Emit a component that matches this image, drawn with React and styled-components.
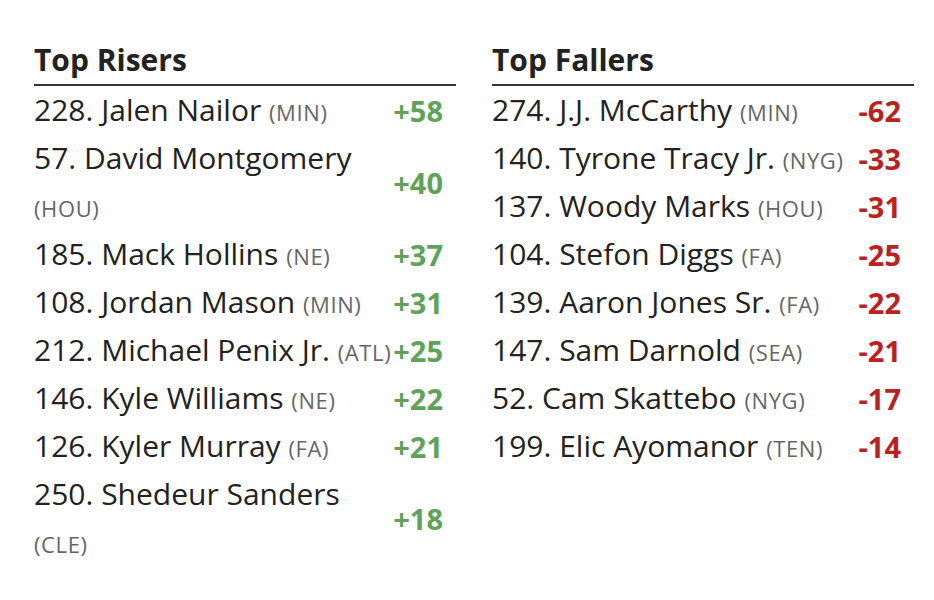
import styled, { createGlobalStyle } from 'styled-components'

const GlobalStyle = createGlobalStyle`
  body {
    margin: 0;
    background: #fff;
    font-family: "Open Sans", "Liberation Sans", sans-serif;
    color: #222;
  }
`

const Page = styled.div`
  display: flex;
  gap: 36px;
  padding: 43px 20px 0 34px;
`

const Column = styled.section`
  width: 422px;
`

const Title = styled.h2`
  margin: 0;
  font-size: 30px;
  font-weight: 700;
  line-height: 34px;
  padding-bottom: 7px;
  border-bottom: 2px solid #333;
  color: #222;
`

const List = styled.div`
  display: grid;
  grid-template-columns: minmax(0, 1fr) auto;
`

const Name = styled.div`
  font-size: 30px;
  line-height: 48px;
  color: #222;
`

const Team = styled.span`
  font-size: 22px;
  line-height: 1;
  letter-spacing: 0.6px;
  color: #666;
`

const Delta = styled.div`
  display: flex;
  align-items: center;
  padding-right: 13px;
  font-size: 29px;
  font-weight: 700;
  color: ${p => (p.$up ? '#5fa35a' : '#b8231f')};
`

const risers = [
  [228, 'Jalen Nailor', 'MIN', 58],
  [57, 'David Montgomery', 'HOU', 40],
  [185, 'Mack Hollins', 'NE', 37],
  [108, 'Jordan Mason', 'MIN', 31],
  [212, 'Michael Penix Jr.', 'ATL', 25],
  [146, 'Kyle Williams', 'NE', 22],
  [126, 'Kyler Murray', 'FA', 21],
  [250, 'Shedeur Sanders', 'CLE', 18],
]

const fallers = [
  [274, 'J.J. McCarthy', 'MIN', -62],
  [140, 'Tyrone Tracy Jr.', 'NYG', -33],
  [137, 'Woody Marks', 'HOU', -31],
  [104, 'Stefon Diggs', 'FA', -25],
  [139, 'Aaron Jones Sr.', 'FA', -22],
  [147, 'Sam Darnold', 'SEA', -21],
  [52, 'Cam Skattebo', 'NYG', -17],
  [199, 'Elic Ayomanor', 'TEN', -14],
]

const Row = ({ rank, name, team, diff }) => (
  <>
    <Name>
      {rank}. {name} <Team>({team})</Team>
    </Name>
    <Delta $up={diff > 0}>{diff > 0 ? `+${diff}` : diff}</Delta>
  </>
)

const Movers = ({ title, rows }) => (
  <Column>
    <Title>{title}</Title>
    <List>
      {rows.map(([rank, name, team, diff]) => (
        <Row key={name} rank={rank} name={name} team={team} diff={diff} />
      ))}
    </List>
  </Column>
)

export default function App() {
  return (
    <>
      <GlobalStyle />
      <Page>
        <Movers title="Top Risers" rows={risers} />
        <Movers title="Top Fallers" rows={fallers} />
      </Page>
    </>
  )
}
